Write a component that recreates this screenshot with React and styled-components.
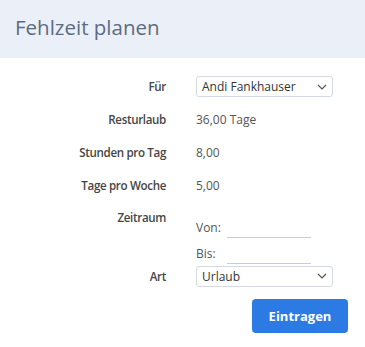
import React from "react";
import styled, { createGlobalStyle } from "styled-components";

const Global = createGlobalStyle`
  html, body { margin: 0; padding: 0; background: #fff; }
  body { font-family: "Open Sans", "Noto Sans", sans-serif; }
  * { box-sizing: border-box; }
`;

const Page = styled.div`
  width: 365px;
  height: 347px;
  background: #fff;
`;

const Header = styled.div`
  height: 58px;
  background: #ebf0f8;
  display: flex;
  align-items: center;
  padding: 0 15px;
`;

const Title = styled.h1`
  margin: 0;
  font-size: 20.5px;
  font-weight: 400;
  color: #5d6b82;
  line-height: 1;
  padding-bottom: 4px;
`;

const Form = styled.div`
  padding: 12px 17px 0 0;
  display: flex;
  flex-direction: column;
`;

const Row = styled.div`
  display: grid;
  grid-template-columns: 166px 1fr;
  column-gap: 30px;
  align-items: ${(p) => (p.$top ? "start" : "center")};
  min-height: ${(p) => p.$h || 33}px;
`;

const Label = styled.div`
  text-align: right;
  font-size: 11.6px;
  font-weight: 600;
  letter-spacing: -0.35px;
  color: #464646;
  line-height: 17px;
  padding-top: ${(p) => p.$pt || 0}px;
`;

const Value = styled.div`
  font-size: 12px;
  color: #555;
  line-height: 17px;
`;

const SelectBox = styled.div`
  width: 137px;
  height: 21px;
  border: 1px solid #d3dae4;
  border-radius: 3px;
  display: flex;
  align-items: center;
  justify-content: space-between;
  padding: 0 5px;
  font-size: 12px;
  color: #333;
  background: #fff;
`;

const DateList = styled.div`
  display: flex;
  flex-direction: column;
  gap: 9px;
  padding-top: 17px;
`;

const DateLine = styled.div`
  display: flex;
  align-items: flex-end;
  font-size: 12px;
  color: #555;
  line-height: 17px;
`;

const DateLabel = styled.span`
  width: 31px;
`;

const DateInput = styled.div`
  width: 84px;
  height: 19px;
  border-bottom: 1px solid #c9ccd1;
  margin-bottom: -2px;
`;

const Footer = styled.div`
  display: flex;
  justify-content: flex-end;
  padding-top: 11px;
`;

const Button = styled.button`
  width: 96px;
  height: 34px;
  border: none;
  border-radius: 4px;
  background: #2c7be5;
  color: #fff;
  font-family: inherit;
  font-size: 13px;
  font-weight: 700;
  cursor: pointer;
`;

const Chevron = () => (
  <svg width="10" height="6" viewBox="0 0 10 6" fill="none">
    <path d="M1 1l4 4 4-4" stroke="#555" strokeWidth="1.2" />
  </svg>
);

export default function App() {
  return (
    <Page>
      <Global />
      <Header>
        <Title>Fehlzeit planen</Title>
      </Header>
      <Form>
        <Row>
          <Label>Für</Label>
          <SelectBox>
            <span>Andi Fankhauser</span>
            <Chevron />
          </SelectBox>
        </Row>
        <Row>
          <Label>Resturlaub</Label>
          <Value>36,00 Tage</Value>
        </Row>
        <Row>
          <Label>Stunden pro Tag</Label>
          <Value>8,00</Value>
        </Row>
        <Row>
          <Label>Tage pro Woche</Label>
          <Value>5,00</Value>
        </Row>
        <Row $top $h={62}>
          <Label $pt={7}>Zeitraum</Label>
          <DateList>
            <DateLine>
              <DateLabel>Von:</DateLabel>
              <DateInput />
            </DateLine>
            <DateLine>
              <DateLabel>Bis:</DateLabel>
              <DateInput />
            </DateLine>
          </DateList>
        </Row>
        <Row $h={24}>
          <Label>Art</Label>
          <SelectBox>
            <span>Urlaub</span>
            <Chevron />
          </SelectBox>
        </Row>
        <Footer>
          <Button>Eintragen</Button>
        </Footer>
      </Form>
    </Page>
  );
}
